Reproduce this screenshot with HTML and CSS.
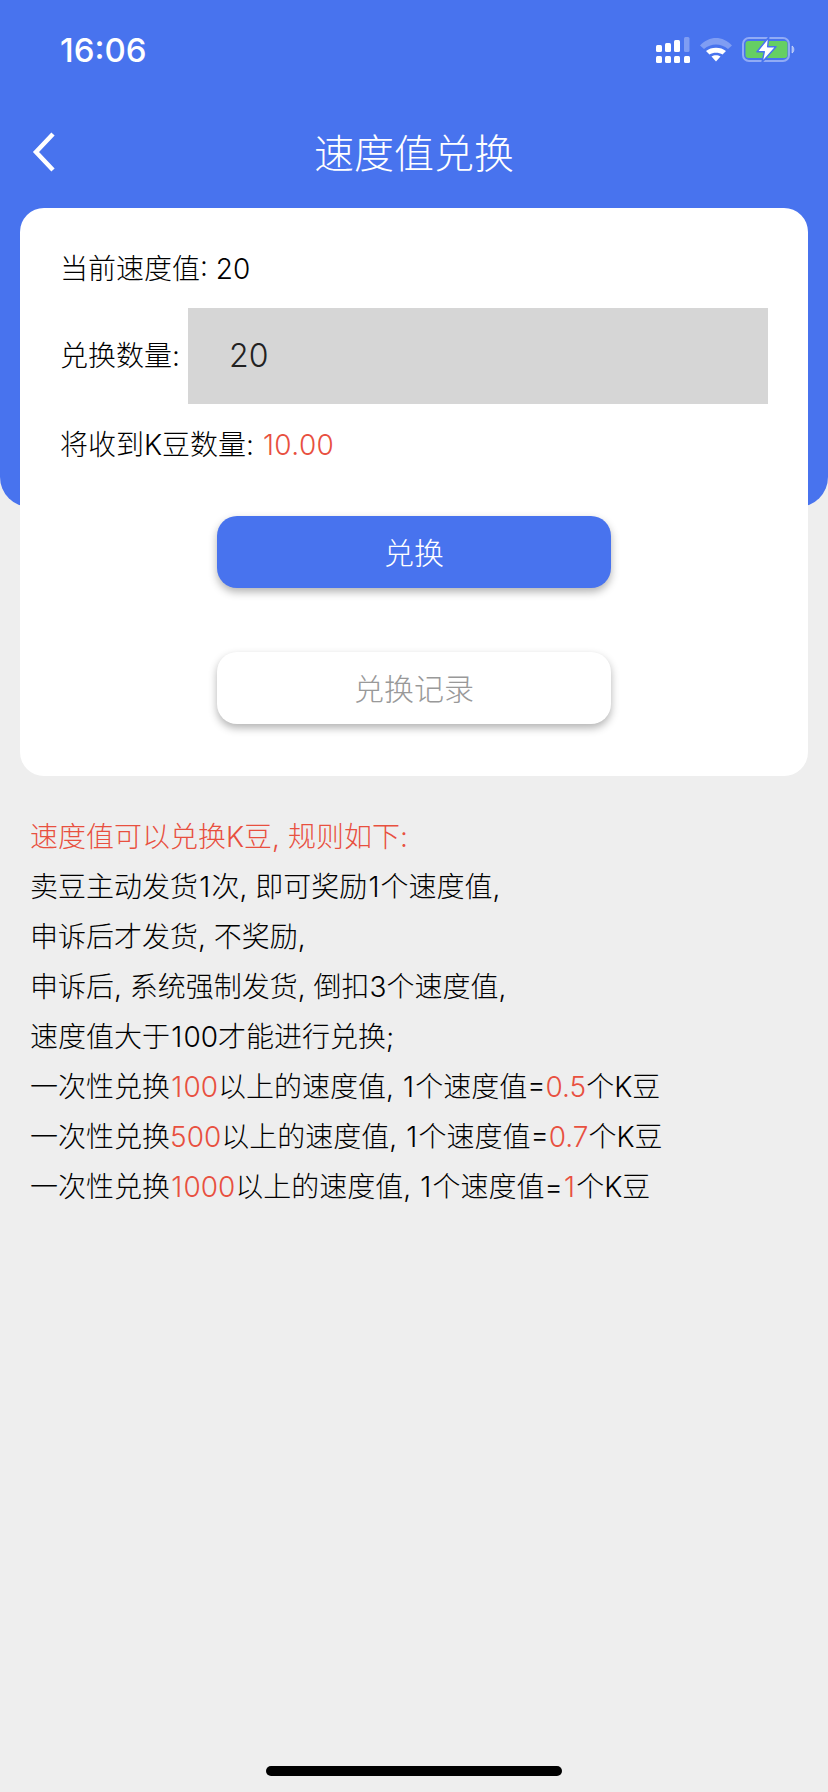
FILE: index.html
```html
<!DOCTYPE html>
<html lang="zh-CN">
<head>
<meta charset="utf-8">
<title>速度值兑换</title>
<link rel="stylesheet" href="styles.css">
</head>
<body>
<div class="page">
  <header class="hero">
    <div class="status">
      <span class="time">16:06</span>
      <svg class="status-icons" width="146" height="28" viewBox="0 0 146 28">
        <g fill="#fff">
          <rect x="0" y="9" width="6" height="7" rx="1.5"/><rect x="9" y="7" width="6" height="9" rx="1.5"/><rect x="18" y="4" width="6" height="12" rx="1.5"/>
          <rect x="28" y="1" width="5.500" height="15" rx="1.500" opacity=".3"/>
          <rect x="0" y="20" width="6" height="7" rx="1.5"/><rect x="9" y="20" width="6" height="7" rx="1.5"/><rect x="18" y="20" width="6" height="7" rx="1.5"/><rect x="28" y="20" width="6" height="7" rx="1.5"/>
        </g>
        <path d="M44 9.500 C53 -.5 67 -.5 76 9.500 L72 13 C65 7 55 7 48 13Z" fill="#fff" opacity=".3"/>
        <path d="M50 15 C55 10.500 65 10.500 70 15 L66.500 18.500 C63 16 57 16 53.500 18.500Z" fill="#fff"/>
        <path d="M55.500 20.500 C58 18.800 62 18.800 64.500 20.500 L60 25.500Z" fill="#fff"/>
        <rect x="87" y="2" width="46" height="23" rx="6" fill="none" stroke="#fff" stroke-opacity=".4" stroke-width="2"/>
        <rect x="89.500" y="5" width="42" height="17" rx="3" fill="#65cf63"/>
        <path d="M136 10 C138.500 11 138.500 16 136 17Z" fill="#fff" fill-opacity=".45" stroke="#fff" stroke-opacity=".45"/>
        <path d="M112.700 1.300 L101 15.700 L108.300 15.700 L106 26.300 L120 10.700 L111.700 10.700Z" fill="#fff" stroke="#4873ee" stroke-width="1.500" stroke-linejoin="round"/>
      </svg>
    </div>
    <div class="nav">
      <svg class="back" width="24" height="40" viewBox="0 0 24 40"><path d="M21 2 L4 20 L21 38" fill="none" stroke="#fff" stroke-width="4.500"/></svg>
      <h1 class="title">速度值兑换</h1>
    </div>
  </header>

  <main class="card">
    <div class="row row-first">当前速度值: 20</div>
    <div class="field">
      <label class="field-label">兑换数量:</label>
      <div class="input">20</div>
    </div>
    <div class="row row-last">将收到K豆数量: <span class="red amount">10.00</span></div>
    <div class="actions">
      <button class="btn btn-primary">兑换</button>
      <button class="btn btn-plain">兑换记录</button>
    </div>
  </main>

  <section class="rules">
    <p class="red">速度值可以兑换K豆, 规则如下:</p>
    <p>卖豆主动发货<span class="one">1</span>次, 即可奖励<span class="one">1</span>个速度值,</p>
    <p>申诉后才发货, 不奖励,</p>
    <p>申诉后, 系统强制发货, 倒扣3个速度值,</p>
    <p>速度值大于<span class="one">1</span>00才能进行兑换;</p>
    <p>一次性兑换<span class="red"><span class="one">1</span>00</span>以上的速度值, <span class="one">1</span>个速度值=<span class="red">0.5</span>个K豆</p>
    <p>一次性兑换<span class="red">500</span>以上的速度值, <span class="one">1</span>个速度值=<span class="red">0.7</span>个K豆</p>
    <p>一次性兑换<span class="red"><span class="one">1</span>000</span>以上的速度值, <span class="one">1</span>个速度值=<span class="red"><span class="one">1</span></span>个K豆</p>
  </section>

  <div class="home-bar"></div>
</div>
</body>
</html>
```

FILE: styles.css
```css
* { box-sizing: border-box; }
html, body { margin: 0; padding: 0; }
body {
  width: 828px;
  height: 1792px;
  overflow: hidden;
  background: #eeeeee;
  color: #000;
  font-family: Inter, "Noto Sans CJK SC", sans-serif;
  font-size: 28px;
  font-weight: 300;
}
.page { position: relative; height: 1792px; }
.hero {
  height: 507px;
  background: #4873ee;
  border-radius: 0 0 30px 30px;
  color: #fff;
}
.status {
  height: 100px;
  padding: 35px 0 0 60px;
  display: flex;
  justify-content: space-between;
  align-items: flex-start;
}
.time { font-size: 33px; line-height: 30px; font-weight: 500; }
.status-icons { margin: 1px 26px 0 0; flex: none; }
.nav {
  height: 108px;
  display: flex;
  align-items: center;
  justify-content: center;
  position: relative;
}
.back { position: absolute; left: 32px; top: 32px; }
.title { margin: 0; font-size: 40px; font-weight: 300; line-height: 50px; }
.card {
  margin: -299px 20px 0;
  padding: 35px 40px 0;
  height: 568px;
  position: relative;
  background: #fff;
  border-radius: 24px;
}
.row { line-height: 50px; }
.row-first { height: 50px; line-height: 52px; }
.row-last { height: 50px; line-height: 52px; }
.amount { letter-spacing: .4px; margin-left: 1px; }
.field {
  display: flex;
  align-items: center;
  margin: 15px 0;
}
.field-label { width: 128px; flex: none; line-height: 48px; margin-bottom: 1px; }
.input {
  flex: 1;
  height: 96px;
  padding-left: 41px;
  background: #d6d6d6;
  color: #222;
  font-size: 32px;
  line-height: 96px;
}
.actions {
  margin: 47px 0 0 -40px;
  width: 788px;
  display: flex;
  flex-direction: column;
  align-items: center;
  gap: 64px;
}
.btn {
  width: 394px;
  height: 72px;
  border: 0;
  padding: 0 0 3px;
  border-radius: 20px;
  font: inherit;
  font-size: 30px;
  box-shadow: 0 4px 8px rgba(0, 0, 0, .3);
}
.btn-primary { background: #4873ee; color: #fff; }
.btn-plain { background: #fff; color: #999; }
.red { color: #e8503f; }
.one { margin: 0 1.2px; }
.rules { padding: 36px 0 0 30px; }
.rules p { margin: 0; line-height: 50px; white-space: nowrap; }
.home-bar {
  position: absolute;
  left: 266px;
  top: 1766px;
  width: 296px;
  height: 10px;
  border-radius: 5px;
  background: #000;
}
```
